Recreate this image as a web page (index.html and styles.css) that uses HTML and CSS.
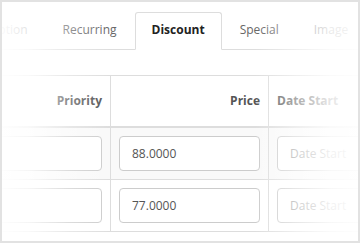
FILE: index.html
```html
<!DOCTYPE html>
<html lang="en">
<head>
<meta charset="utf-8">
<title>Discount</title>
<link rel="stylesheet" href="styles.css">
</head>
<body>
<div class="frame">
  <div class="canvas">
    <ul class="tabs">
      <li class="tab">Option</li>
      <li class="tab">Recurring</li>
      <li class="tab active">Discount</li>
      <li class="tab">Special</li>
      <li class="tab">Image</li>
    </ul>
    <div class="grid">
      <div class="row head">
        <div class="cell right">Priority</div>
        <div class="cell right">Price</div>
        <div class="cell">Date Start</div>
      </div>
      <div class="row striped">
        <div class="cell"><input class="field" type="text" value=""></div>
        <div class="cell"><input class="field" type="text" value="88.0000"></div>
        <div class="cell"><input class="field" type="text" placeholder="Date Start"></div>
      </div>
      <div class="row">
        <div class="cell"><input class="field" type="text" value=""></div>
        <div class="cell"><input class="field" type="text" value="77.0000"></div>
        <div class="cell"><input class="field" type="text" placeholder="Date Start"></div>
      </div>
    </div>
  </div>
  <div class="fade fade-left"></div>
  <div class="fade fade-right"></div>
</div>
</body>
</html>
```
FILE: styles.css
```css
* { box-sizing: border-box; }
html, body { margin: 0; padding: 0; background: #fff; }
body { font-family: "Open Sans", "DejaVu Sans", sans-serif; font-size: 12px; color: #555; }

.frame {
  position: relative;
  width: 360px;
  height: 243px;
  border: 2px solid #e2e2e2;
  overflow: hidden;
  background: #fff;
}

.canvas { width: 600px; }

.tabs {
  list-style: none;
  margin: 10px 0 0 -30px;
  padding: 0;
  display: flex;
  border-bottom: 1px solid #ddd;
}
.tab {
  padding: 8px 16px 10px;
  line-height: 18px;
  border: 1px solid transparent;
  border-radius: 3px 3px 0 0;
  margin: 0 1px -1px 0;
  color: #666;
  white-space: nowrap;
}
.tab.active {
  border-color: #ddd #ddd transparent;
  background: #fff;
  color: #222;
  font-weight: 700;
}

.grid { margin: 25px 0 0 -60px; }
.row {
  display: grid;
  grid-template-columns: 169px 158px 200px;
}
.cell {
  padding: 8px;
  border-right: 1px solid #ddd;
  border-bottom: 1px solid #ddd;
}
.right { text-align: right; }
.head .cell {
  border-top: 1px solid #ddd;
  border-bottom-width: 2px;
  padding: 15px 8px 16px;
  line-height: 19px;
  font-weight: 700;
  color: #555;
}
.striped { background: #f9f9f9; }

.field {
  display: block;
  width: 100%;
  height: 35px;
  padding: 0 12px;
  border: 1px solid #ccc;
  border-radius: 4px;
  background: #fff;
  font: 12px "Open Sans", "DejaVu Sans", sans-serif;
  color: #555;
}
.field::placeholder { color: #999; }

.fade { position: absolute; top: 0; bottom: 0; pointer-events: none; }
.fade-left {
  left: 0;
  width: 110px;
  background: linear-gradient(to right, rgba(255,255,255,.97) 0, rgba(255,255,255,.8) 28px, rgba(255,255,255,.3) 68px, rgba(255,255,255,0) 108px);
}
.fade-right {
  right: 0;
  width: 103px;
  background: linear-gradient(to left, rgba(255,255,255,.95) 0, rgba(255,255,255,.85) 28px, rgba(255,255,255,.5) 63px, rgba(255,255,255,0) 103px);
}
```
